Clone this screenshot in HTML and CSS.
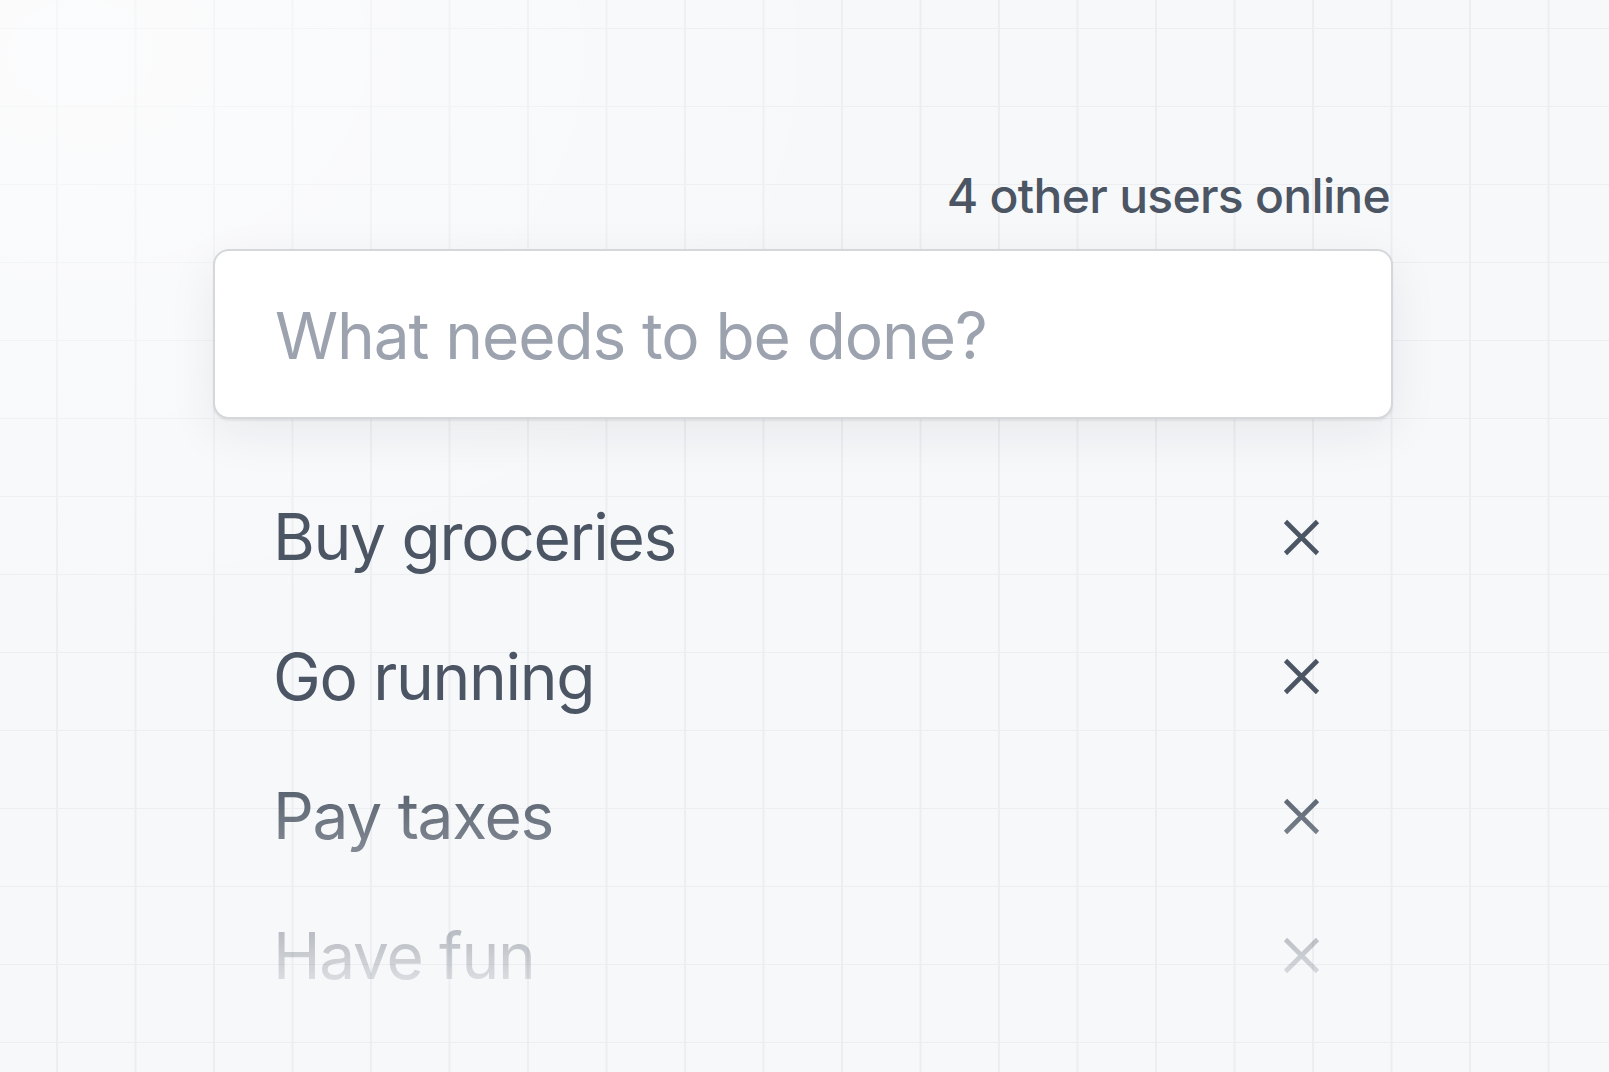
FILE: index.html
```html
<!DOCTYPE html>
<html lang="en">
<head>
<meta charset="utf-8">
<title>Todos</title>
<link rel="stylesheet" href="styles.css">
</head>
<body>
<main class="page">
  <section class="todo-app">
    <p class="presence">4 other users online</p>
    <input class="new-todo" type="text" placeholder="What needs to be done?">
    <ul class="todo-list">
      <li class="todo-item">
        <span class="todo-label">Buy groceries</span>
        <button class="todo-remove" aria-label="Remove">
          <svg viewBox="0 0 37 37" width="37" height="37"><path d="M2.5 2.5 L34.5 34.5 M34.5 2.5 L2.5 34.5"/></svg>
        </button>
      </li>
      <li class="todo-item">
        <span class="todo-label">Go running</span>
        <button class="todo-remove" aria-label="Remove">
          <svg viewBox="0 0 37 37" width="37" height="37"><path d="M2.5 2.5 L34.5 34.5 M34.5 2.5 L2.5 34.5"/></svg>
        </button>
      </li>
      <li class="todo-item">
        <span class="todo-label">Pay taxes</span>
        <button class="todo-remove" aria-label="Remove">
          <svg viewBox="0 0 37 37" width="37" height="37"><path d="M2.5 2.5 L34.5 34.5 M34.5 2.5 L2.5 34.5"/></svg>
        </button>
      </li>
      <li class="todo-item">
        <span class="todo-label">Have fun</span>
        <button class="todo-remove" aria-label="Remove">
          <svg viewBox="0 0 37 37" width="37" height="37"><path d="M2.5 2.5 L34.5 34.5 M34.5 2.5 L2.5 34.5"/></svg>
        </button>
      </li>
    </ul>
  </section>
</main>
</body>
</html>
```

FILE: styles.css
```css
html, body {
  margin: 0;
  padding: 0;
  height: 100%;
}

body {
  font-family: "Inter", "Liberation Sans", sans-serif;
  color: #4b5563;
  background-color: #f7f8fa;
  background-image:
    radial-gradient(ellipse 1100px 800px at 5% 5%, rgba(255,255,255,0.55), rgba(255,255,255,0) 75%),
    linear-gradient(to right, #eceef1 0, #eceef1 1.5px, transparent 1.5px),
    linear-gradient(to bottom, #eceef1 0, #eceef1 1.5px, transparent 1.5px);
  background-size: 100% 100%, 78.5px 78.5px, 78.5px 78px;
  background-position: 0 0, 56px 0, 0 28px;
  overflow: hidden;
}

.page {
  padding: 167px 0 0 213px;
}

.todo-app {
  width: 1180px;
}

.presence {
  margin: 0 0 24px 0;
  padding-right: 3px;
  text-align: right;
  font-size: 48px;
  font-weight: 500;
  line-height: 57.6px;
  color: #4b5563;
  letter-spacing: -0.7px;
}

.new-todo {
  display: block;
  box-sizing: border-box;
  width: 1180px;
  height: 170px;
  margin: 0;
  padding: 3px 60px 0 60px;
  border: 2px solid #d6d7db;
  border-radius: 16px;
  background: #ffffff;
  font-family: inherit;
  font-size: 64px;
  letter-spacing: -1.1px;
  color: #374151;
  outline: none;
  box-shadow: 0 2px 2px rgba(0, 0, 0, 0.06), 0 14px 50px rgba(15, 23, 42, 0.07);
}

.new-todo::placeholder {
  color: #9ca3af;
}

.todo-list {
  list-style: none;
  margin: 49px 0 0 0;
  padding: 0;
  -webkit-mask-image: linear-gradient(to bottom, #000 0, #000 300px, transparent 555px);
  mask-image: linear-gradient(to bottom, #000 0, #000 300px, transparent 555px);
}

.todo-item {
  display: flex;
  align-items: center;
  justify-content: space-between;
  padding: 21.75px 73px 21.75px 60px;
}

.todo-label {
  font-size: 64px;
  line-height: 96px;
  letter-spacing: -1.3px;
  color: #4b5563;
}

.todo-remove {
  display: flex;
  padding: 0;
  margin: 0;
  border: 0;
  background: none;
  cursor: pointer;
}

.todo-remove svg {
  display: block;
  fill: none;
  stroke: #4b5563;
  stroke-width: 4.6;
  stroke-linecap: butt;
}
```
